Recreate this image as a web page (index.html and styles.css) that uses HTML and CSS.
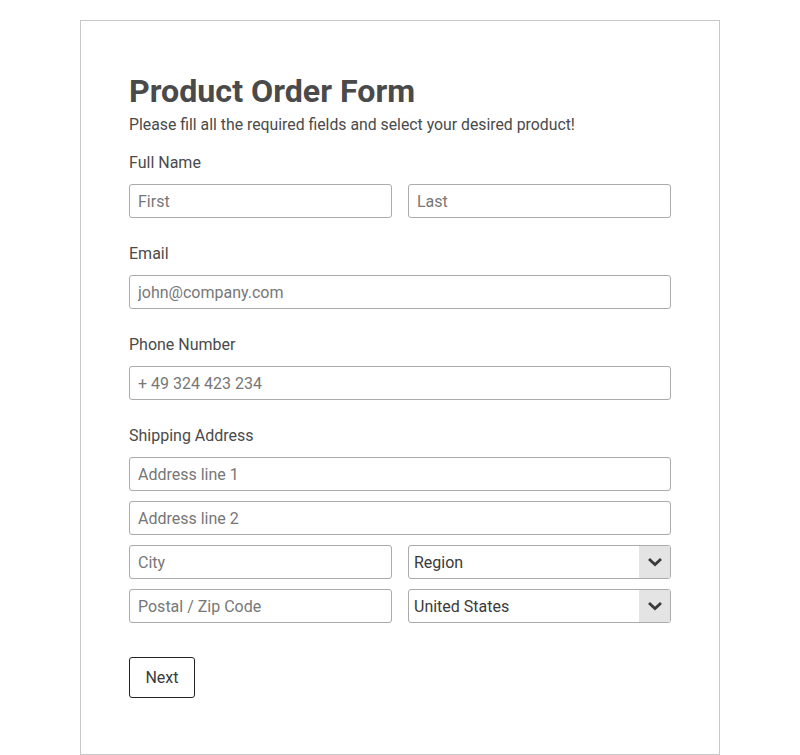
FILE: index.html
```html
<!DOCTYPE html>
<html>
<head>
<meta charset="utf-8">
<link rel="stylesheet" href="styles.css">
</head>
<body>
<div class="card">
  <h1 class="title">Product Order Form</h1>
  <p class="subtitle">Please fill all the required fields and select your desired product!</p>
  <div class="field">
    <label class="label">Full Name</label>
    <div class="row">
      <input class="input" placeholder="First">
      <input class="input" placeholder="Last">
    </div>
  </div>
  <div class="field">
    <label class="label">Email</label>
    <input class="input" placeholder="john@company.com">
  </div>
  <div class="field">
    <label class="label">Phone Number</label>
    <input class="input" placeholder="+ 49 324 423 234">
  </div>
  <div class="field">
    <label class="label">Shipping Address</label>
    <div class="stack">
      <input class="input" placeholder="Address line 1">
      <input class="input" placeholder="Address line 2">
      <div class="row">
        <input class="input" placeholder="City">
        <div class="select"><span class="select-text">Region</span><span class="select-arrow"><svg width="16" height="10" viewBox="0 0 16 10"><path d="M2 2 L8 7.5 L14 2" fill="none" stroke="#3a3a3a" stroke-width="2.8"/></svg></span></div>
      </div>
      <div class="row">
        <input class="input" placeholder="Postal / Zip Code">
        <div class="select"><span class="select-text">United States</span><span class="select-arrow"><svg width="16" height="10" viewBox="0 0 16 10"><path d="M2 2 L8 7.5 L14 2" fill="none" stroke="#3a3a3a" stroke-width="2.8"/></svg></span></div>
      </div>
    </div>
  </div>
  <button class="btn">Next</button>
</div>
</body>
</html>
```

FILE: styles.css
```css
* { box-sizing: border-box; }
body {
  margin: 0;
  background: #fff;
  font-family: Roboto, "Liberation Sans", sans-serif;
  color: #4a4a4a;
}
.card {
  width: 640px;
  margin: 20px 0 0 80px;
  border: 1px solid #c8c8c8;
  padding: 51px 48px 56px;
  height: 735px;
}
.title {
  margin: 0;
  font-size: 32.2px;
  font-weight: 700;
  line-height: 38px;
  color: #4a4a4a;
}
.subtitle {
  margin: 5px 0 0;
  font-size: 15.8px;
  line-height: 19px;
  color: #4a4a4a;
}
.field {
  display: flex;
  flex-direction: column;
}
.label {
  font-size: 16px;
  line-height: 19px;
  margin: 19px 0 12px;
  color: #4a4a4a;
}
.field + .field .label { margin-top: 26px; }
.row {
  display: grid;
  grid-template-columns: 1fr 1fr;
  gap: 16px;
}
.stack {
  display: flex;
  flex-direction: column;
  gap: 10px;
}
.input {
  height: 34px;
  border: 1px solid #ababab;
  border-radius: 3px;
  padding: 0 8px;
  font-family: Roboto, "Liberation Sans", sans-serif;
  font-size: 16px;
  color: #333;
  width: 100%;
}
.input::placeholder { color: #777; }
.select {
  height: 34px;
  border: 1px solid #ababab;
  border-radius: 3px;
  display: flex;
  align-items: stretch;
  overflow: hidden;
}
.select-text {
  flex: 1;
  display: flex;
  align-items: center;
  padding-left: 5px;
  font-size: 16px;
  color: #3a3a3a;
}
.select-arrow {
  width: 31px;
  background: #e4e4e4;
  display: flex;
  align-items: center;
  justify-content: center;
}
.btn {
  margin-top: 34px;
  height: 41px;
  width: 66px;
  background: #fff;
  border: 1px solid #222;
  border-radius: 3px;
  font-family: Roboto, "Liberation Sans", sans-serif;
  font-size: 16px;
  color: #3a3a3a;
  padding: 0;
}
```
